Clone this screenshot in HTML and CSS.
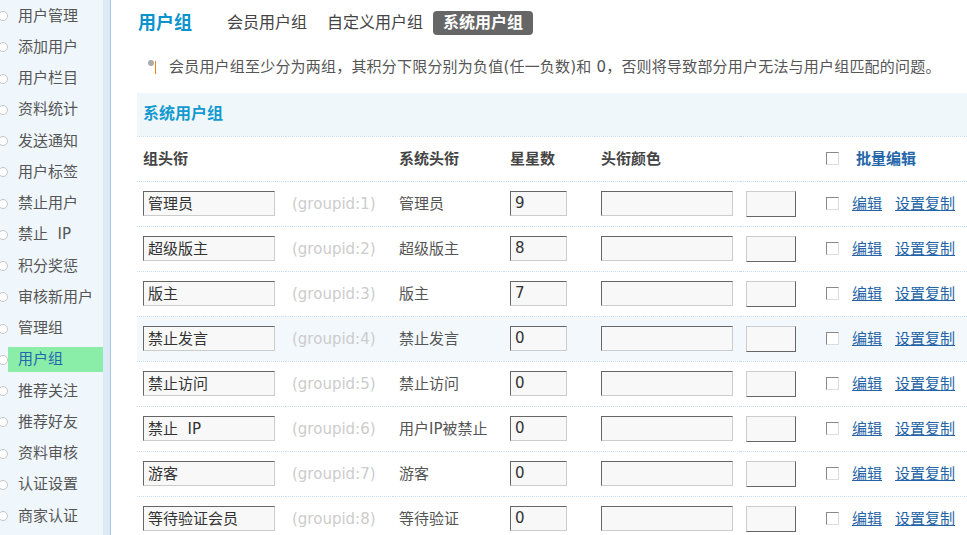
FILE: index.html
```html
<!DOCTYPE html>
<html lang="zh-CN">
<head>
  <meta charset="UTF-8" />
  <title>用户组</title>
  <link rel="stylesheet" href="styles.css">
</head>
<body>
<div class="page">
  <aside class="side">
    <ul class="menu">
      <li><a href="#">用户管理</a></li>
      <li><a href="#">添加用户</a></li>
      <li><a href="#">用户栏目</a></li>
      <li><a href="#">资料统计</a></li>
      <li><a href="#">发送通知</a></li>
      <li><a href="#">用户标签</a></li>
      <li><a href="#">禁止用户</a></li>
      <li><a href="#">禁止&nbsp; IP</a></li>
      <li><a href="#">积分奖惩</a></li>
      <li><a href="#">审核新用户</a></li>
      <li><a href="#">管理组</a></li>
      <li class="active"><a href="#">用户组</a></li>
      <li><a href="#">推荐关注</a></li>
      <li><a href="#">推荐好友</a></li>
      <li><a href="#">资料审核</a></li>
      <li><a href="#">认证设置</a></li>
      <li><a href="#">商家认证</a></li>
    </ul>
  </aside>

  <main class="main">
    <div class="tabs">
      <h2 class="tabs-title">用户组</h2>
      <a href="#" class="tab">会员用户组</a>
      <a href="#" class="tab">自定义用户组</a>
      <a href="#" class="tab current">系统用户组</a>
    </div>

    <p class="tip">
      <svg class="tip-icon" width="10" height="16" viewBox="0 0 10 16">
        <circle cx="4" cy="4" r="3" fill="#aaa"/>
        <line x1="8.5" y1="2" x2="8.5" y2="15" stroke="#e8861a" stroke-width="1"/>
      </svg>
      会员用户组至少分为两组，其积分下限分别为负值(任一负数)和 0，否则将导致部分用户无法与用户组匹配的问题。
    </p>

    <table class="grid">
      <colgroup>
        <col style="width:149px"><col style="width:107px"><col style="width:111px">
        <col style="width:91px"><col style="width:145px"><col style="width:80px"><col>
      </colgroup>
      <tr class="cap"><th colspan="7">系统用户组</th></tr>
      <tr class="head">
        <th>组头衔</th><th></th><th>系统头衔</th><th>星星数</th><th>头衔颜色</th><th></th>
        <th><input type="checkbox" class="chk chk-all"><a href="#" class="batch">批量编辑</a></th>
      </tr>
      <tr>
        <td><input class="inp" value="管理员"></td><td class="gid">(groupid:1)</td><td>管理员</td>
        <td><input class="inp inp-s" value="9"></td><td><input class="inp"></td><td><span class="swatch"></span></td>
        <td><input type="checkbox" class="chk"><a href="#" class="op">编辑</a><a href="#" class="op">设置复制</a></td>
      </tr>
      <tr>
        <td><input class="inp" value="超级版主"></td><td class="gid">(groupid:2)</td><td>超级版主</td>
        <td><input class="inp inp-s" value="8"></td><td><input class="inp"></td><td><span class="swatch"></span></td>
        <td><input type="checkbox" class="chk"><a href="#" class="op">编辑</a><a href="#" class="op">设置复制</a></td>
      </tr>
      <tr>
        <td><input class="inp" value="版主"></td><td class="gid">(groupid:3)</td><td>版主</td>
        <td><input class="inp inp-s" value="7"></td><td><input class="inp"></td><td><span class="swatch"></span></td>
        <td><input type="checkbox" class="chk"><a href="#" class="op">编辑</a><a href="#" class="op">设置复制</a></td>
      </tr>
      <tr class="hover">
        <td><input class="inp" value="禁止发言"></td><td class="gid">(groupid:4)</td><td>禁止发言</td>
        <td><input class="inp inp-s" value="0"></td><td><input class="inp"></td><td><span class="swatch"></span></td>
        <td><input type="checkbox" class="chk"><a href="#" class="op">编辑</a><a href="#" class="op">设置复制</a></td>
      </tr>
      <tr>
        <td><input class="inp" value="禁止访问"></td><td class="gid">(groupid:5)</td><td>禁止访问</td>
        <td><input class="inp inp-s" value="0"></td><td><input class="inp"></td><td><span class="swatch"></span></td>
        <td><input type="checkbox" class="chk"><a href="#" class="op">编辑</a><a href="#" class="op">设置复制</a></td>
      </tr>
      <tr>
        <td><input class="inp" value="禁止  IP"></td><td class="gid">(groupid:6)</td><td>用户IP被禁止</td>
        <td><input class="inp inp-s" value="0"></td><td><input class="inp"></td><td><span class="swatch"></span></td>
        <td><input type="checkbox" class="chk"><a href="#" class="op">编辑</a><a href="#" class="op">设置复制</a></td>
      </tr>
      <tr>
        <td><input class="inp" value="游客"></td><td class="gid">(groupid:7)</td><td>游客</td>
        <td><input class="inp inp-s" value="0"></td><td><input class="inp"></td><td><span class="swatch"></span></td>
        <td><input type="checkbox" class="chk"><a href="#" class="op">编辑</a><a href="#" class="op">设置复制</a></td>
      </tr>
      <tr>
        <td><input class="inp" value="等待验证会员"></td><td class="gid">(groupid:8)</td><td>等待验证</td>
        <td><input class="inp inp-s" value="0"></td><td><input class="inp"></td><td><span class="swatch"></span></td>
        <td><input type="checkbox" class="chk"><a href="#" class="op">编辑</a><a href="#" class="op">设置复制</a></td>
      </tr>
    </table>
  </main>
</div>
</body>
</html>
```

FILE: styles.css
```css
* {
  box-sizing: border-box;
}
body {
  margin: 0;
  font-family: "DejaVu Sans", "Noto Sans CJK SC", sans-serif;
  font-size: 15px;
  color: #555;
  background: #fff;
  overflow: hidden;
}
a {
  text-decoration: none;
}
.page {
  display: flex;
  height: 535px;
  overflow: hidden;
}

/* sidebar */
.side {
  width: 110px;
  flex: none;
  background: #f0f7fc;
  border-right: 7px solid #dceaf7;
}
.menu {
  list-style: none;
  margin: 0;
  padding: 0;
}
.menu li {
  display: flex;
  align-items: center;
  height: 31.25px;
  padding-top: 1px;
}
.menu li::before {
  content: "";
  flex: none;
  width: 8px;
  height: 8px;
  margin-left: -2px;
  border: 1px solid #c4c4c4;
  border-radius: 50%;
  background: #fff;
}
.menu a {
  display: block;
  width: 95px;
  height: 25px;
  line-height: 25px;
  padding-left: 10px;
  color: #555;
  white-space: nowrap;
}
.menu .active a {
  background: #8aeea8;
  color: #2466b0;
}

/* main */
.main {
  flex: 1;
  min-width: 0;
  border-left: 1px solid #a9c8e0;
  padding-left: 26px;
  overflow: hidden;
}
.tabs {
  display: flex;
  align-items: center;
  height: 24px;
  margin-top: 11px;
}
.tabs-title {
  margin: 0 25px 0 1px;
  font-size: 18px;
  font-weight: bold;
  color: #0a93cc;
  line-height: 24px;
}
.tab {
  padding: 0 10px;
  font-size: 16px;
  line-height: 24px;
  color: #444;
  border-radius: 4px;
}
.tab.current {
  background: #666;
  color: #fff;
  font-weight: bold;
}
.tip {
  display: flex;
  align-items: center;
  height: 24px;
  margin: 20px 0 14px;
  padding-left: 10px;
  line-height: 24px;
  color: #555;
  letter-spacing: 0.2px;
  white-space: nowrap;
}
.tip-icon {
  flex: none;
  margin-right: 12px;
}

/* table */
.grid {
  width: 840px;
  table-layout: fixed;
  border-collapse: collapse;
}
.grid th,
.grid td {
  height: 45px;
  padding: 0 6px;
  text-align: left;
  white-space: nowrap;
  line-height: 20px;
  border-bottom: 1px dotted #c9dff0;
  vertical-align: middle;
}
.grid .cap th {
  height: 43px;
  background: #f0f7fb;
  color: #139ad0;
  font-size: 16px;
  font-weight: bold;
}
.grid .head th {
  color: #444;
  font-weight: bold;
}
.grid .hover td {
  background: #f2f8fc;
}
.gid {
  color: #ccc;
}
.inp {
  width: 132px;
  height: 25px;
  padding: 0 4px 2px;
  border: 1px solid;
  border-color: #666 #ccc #ccc #666;
  background: #f8f8f8;
  font: 15px "DejaVu Sans", "Noto Sans CJK SC", sans-serif;
  color: #333;
  vertical-align: middle;
}
.inp-s {
  width: 57px;
}
.swatch {
  display: inline-block;
  width: 50px;
  height: 26px;
  border: 1px solid;
  border-color: #ccc #666 #666 #ccc;
  background: #f8f8f8;
  vertical-align: middle;
}
.chk {
  appearance: none;
  width: 13px;
  height: 13px;
  margin: 0 13px 0 0;
  border: 1px solid;
  border-color: #888 #ddd #ddd #888;
  background: #fff;
  vertical-align: middle;
}
.chk-all {
  margin-right: 17px;
}
.batch {
  color: #2566a8;
  font-weight: bold;
  vertical-align: middle;
}
.op {
  margin-right: 13px;
  color: #2463a6;
  text-decoration: underline;
  vertical-align: middle;
}
```
